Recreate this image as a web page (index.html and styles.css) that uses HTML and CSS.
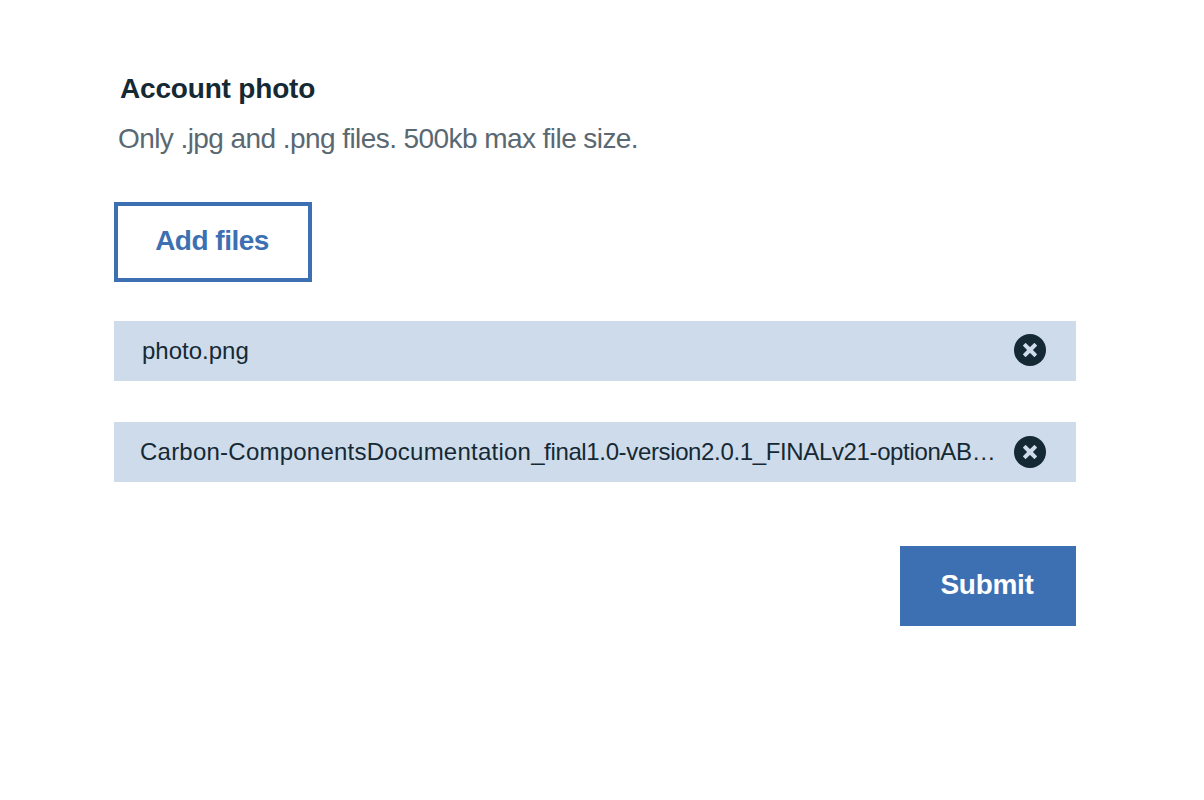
FILE: index.html
```html
<!DOCTYPE html>
<html lang="en">
<head>
<meta charset="utf-8">
<title>Account photo</title>
<link rel="stylesheet" href="styles.css">
</head>
<body>
<main class="uploader">
  <h1 class="title">Account photo</h1>
  <p class="hint">Only .jpg and .png files. 500kb max file size.</p>
  <button class="button button-outline" type="button">Add files</button>
  <ul class="files">
    <li class="file file-short">
      <span class="name name-short">photo.png</span>
      <svg class="remove" viewBox="0 0 32 32" role="img" aria-label="Remove"><circle cx="16" cy="16" r="16"/><path d="M11.6 9.6 16 14 20.4 9.6 22.4 11.6 18 16 22.4 20.4 20.4 22.4 16 18 11.6 22.4 9.6 20.4 14 16 9.6 11.6Z"/></svg>
    </li>
    <li class="file">
      <span class="name"><span class="name-start">Carbon-ComponentsDocumentation</span><span class="name-end">_final1.0-version2.0.1_FINALv21-optionAB…</span></span>
      <svg class="remove" viewBox="0 0 32 32" role="img" aria-label="Remove"><circle cx="16" cy="16" r="16"/><path d="M11.6 9.6 16 14 20.4 9.6 22.4 11.6 18 16 22.4 20.4 20.4 22.4 16 18 11.6 22.4 9.6 20.4 14 16 9.6 11.6Z"/></svg>
    </li>
  </ul>
  <button class="button button-primary" type="button">Submit</button>
</main>
</body>
</html>
```
FILE: styles.css
```css
* { box-sizing: border-box; }
body { margin: 0; background: #fff; color: #152934; font-family: "Liberation Sans", Arial, sans-serif; }
.uploader { display: flex; flex-direction: column; align-items: flex-start; width: 1076px; padding: 71px 0 0 114px; }
.title { margin: 0 0 0 6px; font-size: 28px; line-height: 36px; font-weight: 700; letter-spacing: -0.18px; white-space: nowrap; }
.hint { margin: 14px 0 0 4px; font-size: 28px; line-height: 36px; letter-spacing: -0.57px; color: #5a6872; white-space: nowrap; }
.button { height: 80px; padding: 0 2px 2px 0; font: 700 28px/36px "Liberation Sans", Arial, sans-serif; white-space: nowrap; border: 4px solid #3d70b2; }
.button-outline { width: 198px; margin-top: 45px; background: #fff; color: #3d70b2; letter-spacing: -0.5px; }
.button-primary { width: 176px; margin-top: 64px; align-self: flex-end; background: #3d70b2; color: #fff; letter-spacing: -0.3px; }
.files { display: flex; flex-direction: column; gap: 41px; width: 100%; margin: 39px 0 0; padding: 0; list-style: none; }
.file { display: flex; align-items: center; justify-content: space-between; height: 60px; padding: 0 30px 0 26px; background: #cedbeb; }
.file-short { padding-bottom: 2px; }
.name { font-size: 24px; line-height: 32px; white-space: nowrap; }
.name-short { padding: 2px 0 0 2px; }
.name-start { letter-spacing: 0.23px; }
.name-end { letter-spacing: -0.36px; }
.remove { flex: none; width: 32px; height: 32px; fill: #152934; }
.remove path { fill: #cedbeb; stroke: #cedbeb; stroke-width: 1.2; stroke-linejoin: round; }
```
